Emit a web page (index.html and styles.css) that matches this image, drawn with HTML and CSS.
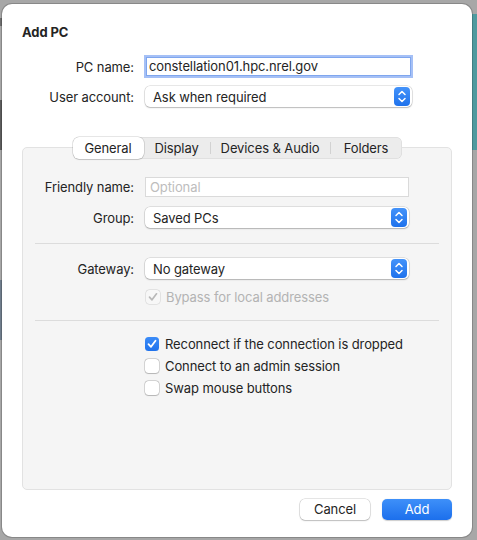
FILE: index.html
```html
<!DOCTYPE html>
<html>
<head>
<meta charset="utf-8">
<link rel="stylesheet" href="styles.css">
</head>
<body>
<div class="dialog">
  <div class="title">Add PC</div>
  <div class="form-grid">
    <label class="lbl">PC name:</label>
    <div class="textfield focused">constellation01.hpc.nrel.gov</div>
    <label class="lbl">User account:</label>
    <div class="popup"><span>Ask when required</span><span class="stepper"><svg width="16" height="19" viewBox="0 0 16 19"><path d="M5 7.5 L8 4.5 L11 7.5 M5 11.5 L8 14.5 L11 11.5" fill="none" stroke="#fff" stroke-width="1.5" stroke-linecap="round" stroke-linejoin="round"/></svg></span></div>
  </div>

  <div class="tabs">
    <div class="tab active t-general">General</div>
    <div class="tab t-display">Display</div>
    <div class="sep"></div>
    <div class="tab t-devices">Devices &amp; Audio</div>
    <div class="sep"></div>
    <div class="tab t-folders">Folders</div>
  </div>

  <div class="panel">
    <div class="panel-grid">
      <label class="lbl">Friendly name:</label>
      <div class="textfield plain"><span class="placeholder">Optional</span></div>
      <label class="lbl">Group:</label>
      <div class="popup"><span>Saved PCs</span><span class="stepper"><svg width="16" height="19" viewBox="0 0 16 19"><path d="M5 7.5 L8 4.5 L11 7.5 M5 11.5 L8 14.5 L11 11.5" fill="none" stroke="#fff" stroke-width="1.5" stroke-linecap="round" stroke-linejoin="round"/></svg></span></div>
    </div>
    <div class="divider d1"></div>
    <div class="panel-grid">
      <label class="lbl">Gateway:</label>
      <div class="popup"><span>No gateway</span><span class="stepper"><svg width="16" height="19" viewBox="0 0 16 19"><path d="M5 7.5 L8 4.5 L11 7.5 M5 11.5 L8 14.5 L11 11.5" fill="none" stroke="#fff" stroke-width="1.5" stroke-linecap="round" stroke-linejoin="round"/></svg></span></div>
      <div></div>
      <div class="check-row disabled"><span class="cb checked-dis"><svg width="14" height="14" viewBox="0 0 14 14"><path d="M3.5 7.2 L6 9.8 L10.5 3.8" fill="none" stroke="#b8b8b8" stroke-width="1.7" stroke-linecap="round" stroke-linejoin="round"/></svg></span><span>Bypass for local addresses</span></div>
    </div>
    <div class="divider d2"></div>
    <div class="checks">
      <div class="check-row"><span class="cb checked"><svg width="14" height="14" viewBox="0 0 14 14"><path d="M3.5 7.2 L6 9.8 L10.5 3.8" fill="none" stroke="#fff" stroke-width="1.8" stroke-linecap="round" stroke-linejoin="round"/></svg></span><span>Reconnect if the connection is dropped</span></div>
      <div class="check-row"><span class="cb"></span><span>Connect to an admin session</span></div>
      <div class="check-row"><span class="cb"></span><span>Swap mouse buttons</span></div>
    </div>
  </div>

  <div class="buttons">
    <div class="btn">Cancel</div>
    <div class="btn primary">Add</div>
  </div>
</div>
</body>
</html>
```

FILE: styles.css
```css
html, body {
  margin: 0;
  padding: 0;
}
body {
  width: 477px;
  height: 540px;
  overflow: hidden;
  font-family: "Inter", "Liberation Sans", sans-serif;
  font-size: 13px;
  letter-spacing: -0.1px;
  color: #242424;
  background:
    linear-gradient(#4f9a9f, #4f9a9f) no-repeat 472px 14px / 5px 136px,
    linear-gradient(#6e6e6e, #6e6e6e) no-repeat 0 18px / 2px 8px,
    linear-gradient(#5d5d5d, #5d5d5d) no-repeat 0 100px / 2px 50px,
    linear-gradient(#6f7d8c, #6f7d8c) no-repeat 0 280px / 2px 60px,
    #a7a7a7;
}
.dialog {
  box-sizing: border-box;
  width: 470px;
  height: 533px;
  margin: 4px 0 0 2px;
  padding: 20px 20px 0 20px;
  background: #fff;
  border-radius: 10px;
  box-shadow: 0 0 0 1px rgba(0,0,0,0.18);
  display: flex;
  flex-direction: column;
}
.title {
  font-weight: 700;
  line-height: 16px;
  height: 16px;
}
.form-grid {
  margin-top: 17px;
  display: grid;
  grid-template-columns: 112px 267px;
  column-gap: 11px;
  row-gap: 10px;
  align-items: center;
}
.lbl {
  text-align: right;
  white-space: nowrap;
  line-height: 16px;
}
.textfield {
  box-sizing: border-box;
  height: 21px;
  line-height: 19px;
  padding: 0 4px;
  background: #fff;
  border: 1px solid #d6d6d6;
  white-space: nowrap;
}
.textfield.focused {
  margin-left: 1px;
  margin-right: 1px;
  height: 19px;
  line-height: 17px;
  border: 1px solid #7fa6ee;
  box-shadow: 0 0 0 2px #a5c0f6;
  padding-left: 2px;
}
.textfield.plain {
  height: 20px;
  line-height: 18px;
  padding-left: 4px;
  border-color: #dadada;
}
.placeholder {
  color: #bdbdbd;
}
.popup {
  box-sizing: border-box;
  height: 21px;
  display: flex;
  align-items: center;
  justify-content: space-between;
  padding: 0 2px 0 8px;
  background: #fff;
  border-radius: 5px;
  box-shadow: 0 0 0 0.5px rgba(0,0,0,0.18), 0 1px 1.5px rgba(0,0,0,0.2);
}
.stepper {
  width: 16px;
  height: 19px;
  border-radius: 4px;
  background: linear-gradient(#4493fa, #1f72ec);
  display: flex;
}
.tabs {
  margin-top: 30px;
  align-self: center;
  display: flex;
  align-items: center;
  height: 22px;
  box-sizing: border-box;
  background: #ececec;
  border-radius: 6px;
  box-shadow: inset 0 0 0 0.5px rgba(0,0,0,0.1);
  margin-bottom: -12px;
  position: relative;
  z-index: 1;
}
.tab {
  line-height: 22px;
  text-align: center;
  white-space: nowrap;
}
.t-general { width: 71px; }
.t-display { width: 66px; }
.t-devices { width: 119px; }
.t-folders { width: 71px; }
.tab.active {
  background: #fff;
  border-radius: 6px;
  box-shadow: 0 0 0 0.5px rgba(0,0,0,0.2), 0 1px 1px rgba(0,0,0,0.12);
}
.sep {
  width: 1px;
  height: 12px;
  background: #d2d2d2;
}
.panel {
  box-sizing: border-box;
  height: 343px;
  background: #f5f5f5;
  border: 1px solid #e2e2e2;
  border-radius: 5px;
  padding: 29px 12px 0 12px;
  display: flex;
  flex-direction: column;
}
.panel-grid {
  display: grid;
  grid-template-columns: 99px 264px;
  column-gap: 11px;
  row-gap: 10px;
  align-items: center;
}
.divider {
  height: 1px;
  background: #dcdcdc;
}
.d1 { margin: 15px 0 14px 0; }
.panel-grid .check-row.disabled { margin-top: -1px; height: 18px; }
.d2 { margin: 14px 0 12px 0; }
.checks {
  display: flex;
  flex-direction: column;
  padding-left: 110px;
}
.check-row {
  display: flex;
  align-items: center;
  gap: 6px;
  height: 22px;
  white-space: nowrap;
}
.check-row.disabled {
  color: #b3b3b3;
  padding-left: 1px;
}
.cb {
  box-sizing: border-box;
  width: 14px;
  height: 14px;
  border-radius: 3.5px;
  background: #fff;
  box-shadow: 0 0 0 0.5px rgba(0,0,0,0.25), 0 0.5px 1px rgba(0,0,0,0.15);
  display: flex;
}
.cb.checked {
  background: linear-gradient(#3b8cf8, #1f72ec);
  box-shadow: none;
}
.cb.checked-dis {
  background: #f7f7f7;
  box-shadow: 0 0 0 0.5px rgba(0,0,0,0.15);
}
.buttons {
  margin-top: 9px;
  display: flex;
  justify-content: flex-end;
  gap: 12px;
}
.btn {
  width: 70px;
  height: 21px;
  line-height: 21px;
  text-align: center;
  border-radius: 5px;
  background: #fff;
  box-shadow: 0 0 0 0.5px rgba(0,0,0,0.2), 0 1px 1.5px rgba(0,0,0,0.18);
}
.btn.primary {
  color: #fff;
  background: linear-gradient(#3e90f9, #1c6fec);
  box-shadow: 0 0.5px 1px rgba(0,0,0,0.2);
}
```
